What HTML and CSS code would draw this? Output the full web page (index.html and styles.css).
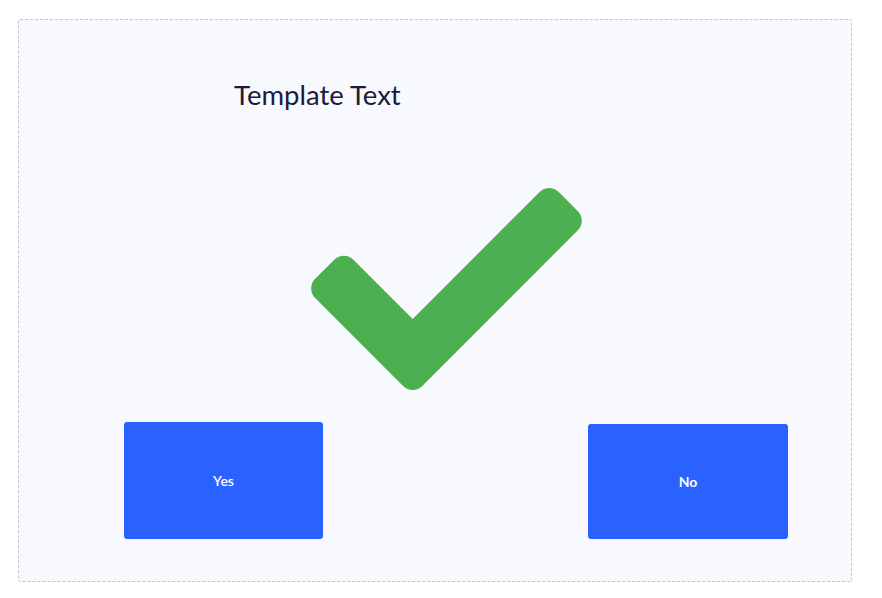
FILE: index.html
```html
<!DOCTYPE html>
<html lang="en">
<head>
<meta charset="utf-8">
<title>Template</title>
<link rel="stylesheet" href="styles.css">
</head>
<body>
<div class="canvas">
  <h1 class="title">Template Text</h1>
  <svg class="check" viewBox="0 65 512 384" width="271" height="203" aria-hidden="true">
    <path fill="#4caf50" d="M173.898 439.404l-166.4-166.4c-9.997-9.997-9.997-26.206 0-36.204l36.203-36.204c9.997-9.998 26.207-9.998 36.204 0L192 312.69 432.095 72.596c9.997-9.997 26.207-9.997 36.204 0l36.203 36.204c9.997 9.997 9.997 26.206 0 36.204l-294.4 294.401c-9.998 9.997-26.207 9.997-36.204-.001z"/>
  </svg>
  <div class="actions">
    <button class="btn btn-yes">Yes</button>
    <button class="btn btn-no">No</button>
  </div>
</div>
</body>
</html>
```
FILE: styles.css
```css
* { box-sizing: border-box; }
html, body { background: #ffffff; }
body {
  margin: 0;
  padding: 19px 0 0 18px;
  font-family: Lato, "Noto Sans", sans-serif;
}
.canvas {
  width: 834px;
  height: 563px;
  border: 1px dashed #c4c4cf;
  border-radius: 2px;
  background: #f8f9fe;
  display: flex;
  flex-direction: column;
  align-items: flex-start;
}
.title {
  margin: 58px 0 0 215px;
  font-size: 27.5px;
  line-height: 34px;
  font-weight: 400;
  color: #1c1b3d;
}
.check {
  display: block;
  margin: 76px 0 0 292px;
}
.actions {
  display: flex;
  align-items: flex-end;
  margin-top: 31px;
}
.btn {
  border: none;
  border-radius: 3px;
  background: #2962ff;
  color: #ffffff;
  font-family: Lato, "Noto Sans", sans-serif;
  font-size: 14px;
  padding: 0;
}
.btn-yes {
  margin-left: 105px;
  width: 199px;
  height: 117px;
  font-weight: 600;
}
.btn-no {
  margin-left: 265px;
  width: 200px;
  height: 115px;
  font-weight: 700;
}
```
